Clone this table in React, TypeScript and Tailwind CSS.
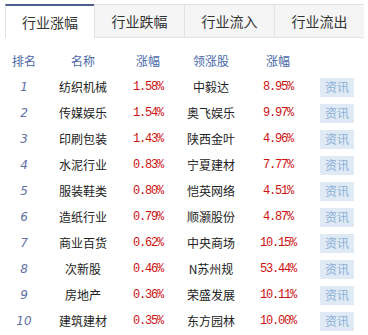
const rows = [
  { name: '纺织机械', pct: '1.58%', lead: '中毅达', lpct: '8.95%' },
  { name: '传媒娱乐', pct: '1.54%', lead: '奥飞娱乐', lpct: '9.97%' },
  { name: '印刷包装', pct: '1.43%', lead: '陕西金叶', lpct: '4.96%' },
  { name: '水泥行业', pct: '0.83%', lead: '宁夏建材', lpct: '7.77%' },
  { name: '服装鞋类', pct: '0.80%', lead: '恺英网络', lpct: '4.51%' },
  { name: '造纸行业', pct: '0.79%', lead: '顺灏股份', lpct: '4.87%' },
  { name: '商业百货', pct: '0.62%', lead: '中央商场', lpct: '10.15%' },
  { name: '次新股', pct: '0.46%', lead: 'N苏州规', lpct: '53.44%' },
  { name: '房地产', pct: '0.36%', lead: '荣盛发展', lpct: '10.11%' },
  { name: '建筑建材', pct: '0.35%', lead: '东方园林', lpct: '10.00%' },
]

const tabs = ['行业涨幅', '行业跌幅', '行业流入', '行业流出']

const cjk = "font-['Noto_Sans_CJK_SC',sans-serif]"
const num = "font-['Liberation_Mono','Noto_Sans_CJK_SC',monospace] text-[12px] tracking-[-1.2px] text-[#cc1111]"
const cols = 'grid grid-cols-[48px_70px_60px_66px_68px_50px] items-center'

export default function App() {
  return (
    <div className={`w-[368px] h-[335px] bg-white overflow-hidden ${cjk}`}>
      <div className="flex pt-[4px] pl-[5px]">
        {tabs.map((t, i) => (
          <div
            key={t}
            className={
              i === 0
                ? 'w-[89px] h-[34px] flex items-center justify-center border-t-2 border-t-[#4d5c8c] border-l border-l-[#e2e2e2] bg-white text-[14px] text-[#333]'
                : 'w-[90px] h-[34px] flex items-center justify-center border-t border-b border-l border-[#e2e2e2] bg-[#f5f5f5] text-[14px] text-[#333]'
            }
          >
            {t}
          </div>
        ))}
      </div>

      <div className={`${cols} h-[26px] mt-[10px] text-[12px] text-[#4a68a8] text-center`}>
        <span>排名</span>
        <span>名称</span>
        <span>涨幅</span>
        <span>领涨股</span>
        <span>涨幅</span>
        <span />
      </div>

      {rows.map((r, i) => (
        <div key={r.name} className={`${cols} h-[26px] text-center`}>
          <span className="font-['DejaVu_Sans',sans-serif] italic text-[12px] text-[#6172a6]">{i + 1}</span>
          <span className="text-[12px] text-[#222]">{r.name}</span>
          <span className={num}>{r.pct}</span>
          <span className="text-[12px] text-[#222]">{r.lead}</span>
          <span className={num}>{r.lpct}</span>
          <span className="flex justify-center">
            <span className="w-[34px] h-[19px] flex items-center justify-center bg-[#dfeaf5] text-[12px] text-[#8aaed6]">资讯</span>
          </span>
        </div>
      ))}
    </div>
  )
}
